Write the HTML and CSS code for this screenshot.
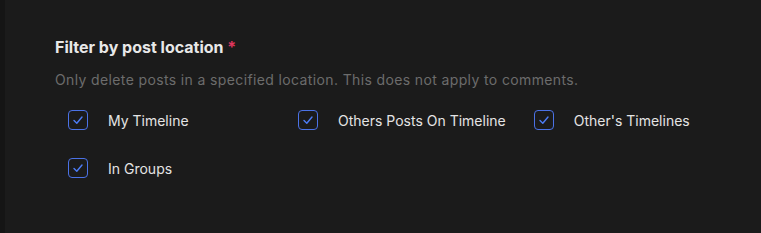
FILE: index.html
```html
<!DOCTYPE html>
<html lang="en">
<head>
    <meta charset="UTF-8">
    <meta name="viewport" content="width=device-width, initial-scale=1.0">
    <title>Filter by post location</title>
    <link rel="stylesheet" href="styles.css">
</head>
<body>

<div class="page">
    <div class="side-strip"></div>

    <div class="panel">
        <h3 class="field-title">Filter by post location <span class="required">*</span></h3>
        <p class="field-hint">Only delete posts in a specified location. This does not apply to comments.</p>

        <!-- Location checkboxes -->
        <div class="options">
            <label class="option">
                <span class="check">
                    <svg viewBox="0 0 20 20" width="20" height="20"><path d="M6 10.5 L8.8 13.3 L14 7" fill="none" stroke="#4d7cf5" stroke-width="1.4" stroke-linecap="round" stroke-linejoin="round"/></svg>
                </span>
                <span class="option-text">My Timeline</span>
            </label>
            <label class="option">
                <span class="check">
                    <svg viewBox="0 0 20 20" width="20" height="20"><path d="M6 10.5 L8.8 13.3 L14 7" fill="none" stroke="#4d7cf5" stroke-width="1.4" stroke-linecap="round" stroke-linejoin="round"/></svg>
                </span>
                <span class="option-text">Others Posts On Timeline</span>
            </label>
            <label class="option">
                <span class="check">
                    <svg viewBox="0 0 20 20" width="20" height="20"><path d="M6 10.5 L8.8 13.3 L14 7" fill="none" stroke="#4d7cf5" stroke-width="1.4" stroke-linecap="round" stroke-linejoin="round"/></svg>
                </span>
                <span class="option-text">Other's Timelines</span>
            </label>
            <label class="option">
                <span class="check">
                    <svg viewBox="0 0 20 20" width="20" height="20"><path d="M6 10.5 L8.8 13.3 L14 7" fill="none" stroke="#4d7cf5" stroke-width="1.4" stroke-linecap="round" stroke-linejoin="round"/></svg>
                </span>
                <span class="option-text">In Groups</span>
            </label>
        </div>
    </div>
</div>

</body>
</html>
```

FILE: styles.css
```css
body {
    margin: 0;
    background-color: #1b1b1b;
    font-family: Inter, "Noto Sans", sans-serif;
    color: #e6e6e6;
}

.page {
    display: flex;
    height: 233px;
}

.side-strip {
    width: 5px;
    background-color: #151515;
}

.panel {
    flex: 1;
    padding: 36px 20px 0 50px;
}

.field-title {
    margin: 0;
    font-size: 16px;
    font-weight: 700;
    line-height: 22px;
    color: #e8e8e8;
}

.required {
    color: #e0365f;
}

.field-hint {
    margin: 12px 0 0 0;
    font-size: 14px;
    line-height: 20px;
    letter-spacing: 0.37px;
    color: #6c6c6c;
}

.options {
    display: flex;
    flex-wrap: wrap;
    column-gap: 28px;
    padding: 6px 0 0 13px;
}

.option {
    display: flex;
    align-items: center;
    min-width: 202px;
    height: 48px;
    cursor: pointer;
}

.check {
    width: 20px;
    height: 20px;
    box-sizing: border-box;
    border: 1.5px solid #4b72e6;
    border-radius: 4px;
    display: flex;
    align-items: center;
    justify-content: center;
}

.check svg {
    flex: none;
}

.option-text {
    margin-left: 20px;
    font-size: 14px;
    color: #e4e4e4;
}
```
